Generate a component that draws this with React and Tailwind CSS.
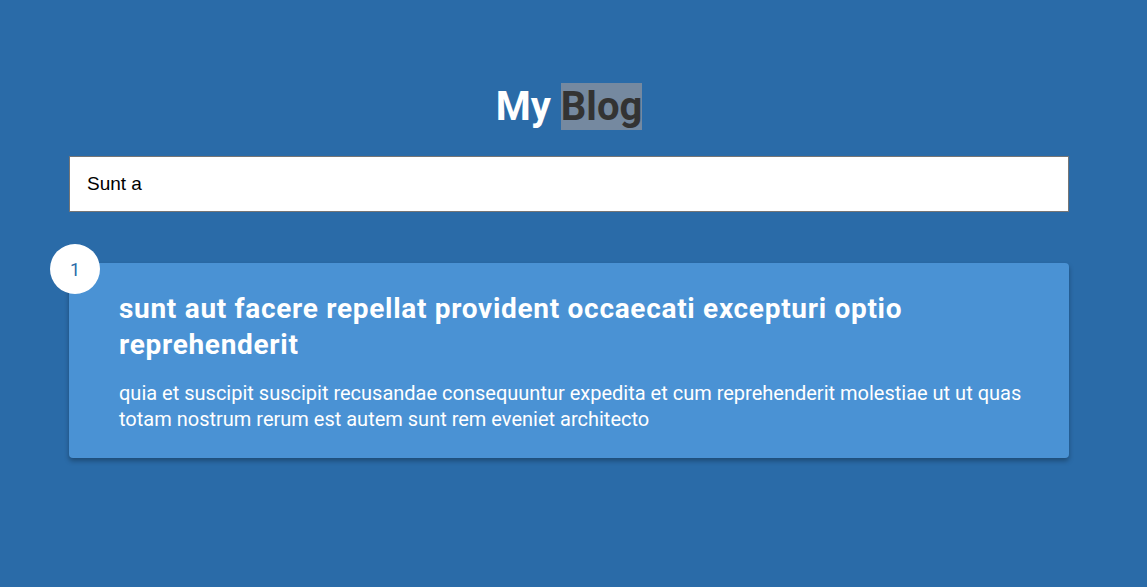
import React from "react";

const posts = [
  {
    id: 1,
    title: "sunt aut facere repellat provident occaecati excepturi optio reprehenderit",
    body: "quia et suscipit suscipit recusandae consequuntur expedita et cum reprehenderit molestiae ut ut quas totam nostrum rerum est autem sunt rem eveniet architecto",
  },
];

const App = () => {
  return (
    <div className="min-h-[587px] w-full bg-[#2a6ba8] pr-[9px] font-['Roboto',sans-serif]">
      <div className="mx-auto w-[1000px] pt-[83px]">
        <h1 className="text-center text-[40px] font-bold leading-[48px] text-white">
          My <span className="bg-[#7589a0] text-[#333333]">Blog</span>
        </h1>

        <input
          type="text"
          defaultValue="Sunt a"
          className="mt-[25px] block h-[56px] w-full border border-[#767676] bg-white px-[17px] font-['Liberation_Sans',Arial,sans-serif] text-[19px] text-black outline-none"
        />

        <div className="mt-[51px] flex flex-col">
          {posts.map((post) => (
            <div
              key={post.id}
              className="relative rounded-[4px] bg-[#4a92d4] pt-[28px] pb-[26px] pl-[50px] pr-[40px] text-white shadow-[0_3px_5px_rgba(0,0,0,0.3)]"
            >
              <span className="absolute -top-[19px] -left-[19px] flex h-[50px] w-[50px] items-center justify-center rounded-full bg-white text-[18px] text-[#2a6ba8]">
                {post.id}
              </span>
              <h2 className="text-[28px] font-bold leading-[36px] tracking-[0.7px]">
                {post.title}
              </h2>
              <p className="mt-[17px] text-[20px] leading-[26px]">{post.body}</p>
            </div>
          ))}
        </div>
      </div>
    </div>
  );
};

export default App;
